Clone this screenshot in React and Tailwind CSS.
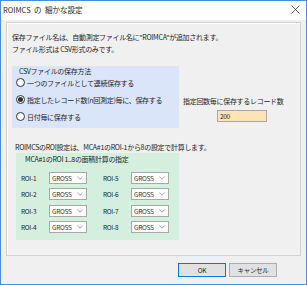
import React from "react";

const font = "font-['Noto_Sans_CJK_JP','Noto_Sans',sans-serif]";

function Radio({ checked, label }) {
  return (
    <div className="h-[17px] flex items-center pl-[4px] gap-[2px]">
      <span className="w-[9px] h-[9px] rounded-full border border-[#333] bg-white flex items-center justify-center shrink-0">
        {checked && <span className="w-[5px] h-[5px] rounded-full bg-[#333]" />}
      </span>
      <span className="leading-[10px] whitespace-nowrap">{label}</span>
    </div>
  );
}

function Combo() {
  return (
    <div className="w-[38px] h-[12px] bg-white border border-[#a8a8a8] flex items-center justify-between pl-[2px] pr-[3px] shrink-0">
      <span className="leading-[10px] text-[6.5px] text-[#333]">GROSS</span>
      <svg width="6" height="4" viewBox="0 0 6 4">
        <path d="M0.5 0.8 L3 3.2 L5.5 0.8" stroke="#888" strokeWidth="0.8" fill="none" />
      </svg>
    </div>
  );
}

function RoiRow({ a, b }) {
  return (
    <div className="flex items-center h-[12px]">
      <span className="w-[28px] pl-[5px] box-content leading-[10px] text-[6.5px] whitespace-nowrap">{a}</span>
      <Combo />
      <span className="w-[16px]" />
      <span className="w-[28px] leading-[10px] text-[6.5px] whitespace-nowrap">{b}</span>
      <Combo />
    </div>
  );
}

export default function App() {
  return (
    <div className={`${font} w-[307px] h-[285px] border border-[#4a8fd6] bg-[#f0f0f0] flex flex-col text-[7px] tracking-[-0.3px] text-[#1e1e1e]`}>
      <div className="h-[19px] bg-white flex items-center justify-between pl-[2px] pr-[6px] pb-[2px] shrink-0">
        <span className="text-[7.5px] leading-[10px] whitespace-pre tracking-normal">ROIMCS  の  細かな設定</span>
        <svg width="9" height="9" viewBox="0 0 9 9">
          <path d="M0.5 0.5 L8.5 8.5 M8.5 0.5 L0.5 8.5" stroke="#333" strokeWidth="0.8" />
        </svg>
      </div>
      <div className="flex-1 flex flex-col px-[5px] pt-[2px]">
        <div className="h-[234px] border border-[#d2d2d2] shadow-[inset_1px_1px_0_#ffffff] pl-[5px] pt-[8px] flex flex-col">
          <div className="leading-[12px] whitespace-nowrap">保存ファイル名は、自動測定ファイル名に"ROIMCA"が追加されます。</div>
          <div className="leading-[12px] whitespace-nowrap">ファイル形式は CSV形式のみです。</div>
          <div className="flex mt-[11px]">
            <div className="w-[167px] h-[62px] bg-[#dbe5fa] flex flex-col">
              <div className="h-[8px] leading-[10px] pl-[7px] whitespace-nowrap">CSVファイルの保存方法</div>
              <Radio label="一つのファイルとして連続保存する" />
              <Radio checked label="指定したレコード数(n回測定)毎に、保存する" />
              <Radio label="日付毎に保存する" />
            </div>
            <div className="ml-[4px] pt-[30px] flex flex-col">
              <div className="leading-[10px] whitespace-nowrap">指定回数毎に保存するレコード数</div>
              <div className="ml-[34px] mt-[3.5px] w-[50px] h-[12px] bg-[#fde3b6] border border-[#a8a8a8] flex items-center pl-[2px]">
                <span className="text-[6.5px] leading-[10px]">200</span>
              </div>
            </div>
          </div>
          <div className="mt-[13px] pl-[3px] leading-[12px] whitespace-nowrap">ROIMCSのROI設定は、MCA#1のROI-1から8の設定で計算します。</div>
          <div className="ml-[4px] w-[163px] h-[87px] bg-[#d4efde] flex flex-col pt-[1px]">
            <div className="h-[10px] leading-[10px] pl-[9px] whitespace-nowrap">MCA#1のROI 1..8の面積計算の指定</div>
            <div className="flex flex-col gap-[4.5px] mt-[7.5px]">
              <RoiRow a="ROI-1" b="ROI-5" />
              <RoiRow a="ROI-2" b="ROI-6" />
              <RoiRow a="ROI-3" b="ROI-7" />
              <RoiRow a="ROI-4" b="ROI-8" />
            </div>
          </div>
        </div>
        <div className="flex justify-end gap-[3px] mt-[7px] pr-[24px]">
          <div className="w-[48px] h-[14px] bg-[#e1e1e1] border border-[#0078d7] flex items-center justify-center">
            <span className="leading-[10px] text-[6.5px]">OK</span>
          </div>
          <div className="w-[48px] h-[14px] bg-[#e1e1e1] border border-[#adadad] flex items-center justify-center">
            <span className="leading-[10px] text-[6.5px]">キャンセル</span>
          </div>
        </div>
      </div>
    </div>
  );
}
